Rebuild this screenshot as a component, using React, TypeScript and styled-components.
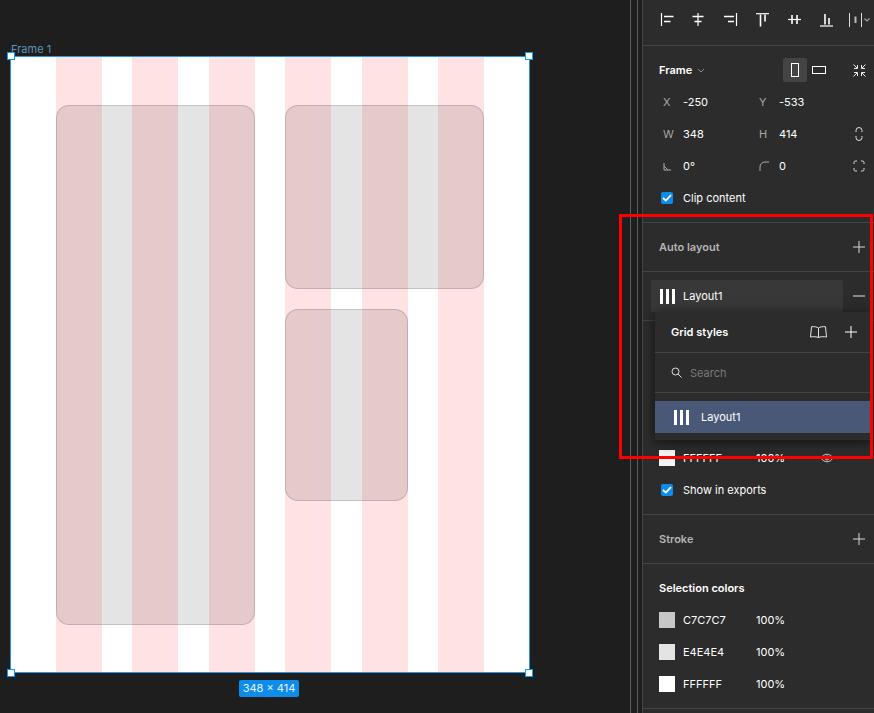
import * as React from 'react';
import styled, { createGlobalStyle } from 'styled-components';

const GlobalStyle = createGlobalStyle`
  html, body {
    margin: 0;
    padding: 0;
    background: #1e1e1e;
    overflow: hidden;
  }
  * { box-sizing: border-box; }
`;

const Screen = styled.div`
  width: 874px;
  height: 713px;
  display: flex;
  background: #1e1e1e;
  font-family: Inter, "Liberation Sans", sans-serif;
  font-size: 11px;
  color: #fff;
  position: relative;
  overflow: hidden;
`;

const Canvas = styled.div`
  width: 630px;
  flex-shrink: 0;
  padding: 56px 0 0 10px;
`;

const FrameBox = styled.div`
  position: relative;
  width: 520px;
  height: 617px;
  background: #fff;
  border: 1px solid #2a95e6;
`;

const FrameLabel = styled.span`
  position: absolute;
  left: 0;
  top: -14px;
  font-size: 11px;
  line-height: 13px;
  color: #5d93b8;
`;

const Handle = styled.span<{ $x: 'l' | 'r'; $y: 't' | 'b' }>`
  position: absolute;
  width: 8px;
  height: 8px;
  background: #fff;
  border: 1px solid #0d99ff;
  z-index: 3;
  ${(p) => (p.$x === 'l' ? 'left: -4px;' : 'right: -4px;')}
  ${(p) => (p.$y === 't' ? 'top: -5px;' : 'bottom: -5px;')}
`;

const SizeBadge = styled.span`
  position: absolute;
  left: 228px;
  top: 623px;
  height: 17px;
  width: 60px;
  background: #0d8ce9;
  border-radius: 2px;
  font-size: 11px;
  line-height: 17px;
  text-align: center;
  color: #e6f4ff;
`;

const GridColumns = styled.div`
  position: absolute;
  inset: 0 45px;
  display: grid;
  grid-template-columns: repeat(6, 46px);
  justify-content: space-between;
`;

const GridColumn = styled.div`
  background: #ffe2e3;
`;

const CardGrid = styled.div`
  position: absolute;
  left: 45px;
  top: 48px;
  display: grid;
  grid-template-columns: 199px 123px 46px;
  grid-template-rows: 183.5px 192px 103.5px;
  column-gap: 30px;
  row-gap: 20.5px;
  width: 428px;
`;

const Card = styled.div<{ $area: string }>`
  grid-area: ${(p) => p.$area};
  border: 1px solid rgba(0, 0, 0, 0.14);
  border-radius: 13px;
  background: rgba(0, 0, 0, 0.105);
`;

const Rails = styled.div`
  width: 12px;
  flex-shrink: 0;
  border-left: 1px solid #5e5e5e;
`;

const Rail = styled.div`
  width: 7px;
  height: 100%;
  border-right: 1px solid #5e5e5e;
`;

const Panel = styled.aside`
  width: 232px;
  flex-shrink: 0;
  background: #2c2c2c;
  border-left: 1px solid #444;
`;

const Section = styled.section<{ $h: number }>`
  height: ${(p) => p.$h}px;
  border-bottom: 1px solid #444;
`;

const AlignBar = styled(Section)`
  display: flex;
  align-items: center;
  gap: 18px;
  padding: 0 0 5px 17px;
  svg { flex-shrink: 0; }
`;

const LastAlign = styled.svg`
  margin-left: -3px;
`;

const FrameSection = styled(Section)`
  padding-top: 12px;
`;

const Row = styled.div`
  display: flex;
  align-items: center;
  height: 32px;
  padding-left: 16px;
  position: relative;
`;

const Title = styled.span<{ $muted?: boolean }>`
  font-weight: 600;
  font-size: 11px;
  color: ${(p) => (p.$muted ? '#b4b4b4' : '#fff')};
`;

const HeaderRow = styled.div`
  display: flex;
  align-items: center;
  justify-content: space-between;
  height: 48px;
  padding: 0 9px 0 16px;
`;

const ColorsHead = styled.div`
  height: 40px;
  padding: 17px 0 0 16px;
  line-height: 14px;
`;

const FrameHead = styled.div`
  display: flex;
  align-items: center;
  height: 24px;
  padding-left: 16px;
  margin-bottom: 4px;
`;

const Caret = styled.svg`
  margin-left: 5px;
`;

const OrientGroup = styled.div`
  display: flex;
  margin-left: 78px;
`;

const OrientButton = styled.div<{ $active?: boolean }>`
  width: 24px;
  height: 24px;
  display: flex;
  align-items: center;
  justify-content: center;
  border-radius: 2px;
  background: ${(p) => (p.$active ? '#444' : 'transparent')};
`;

const Expand = styled.svg`
  margin-left: 22px;
`;

const Field = styled.div`
  display: grid;
  grid-template-columns: 24px 72px 24px 72px 1fr;
  align-items: center;
  height: 32px;
  padding-left: 16px;
`;

const FieldLabel = styled.span`
  color: #a8a8a8;
  font-size: 11px;
  padding-left: 4px;
`;

const FieldValue = styled.span`
  color: #fff;
  font-size: 11px;
`;

const FieldIcon = styled.svg<{ $ml: number }>`
  margin-left: ${(p) => p.$ml}px;
`;

const Check = styled.span`
  width: 12px;
  height: 12px;
  border-radius: 2px;
  background: #0d8ce9;
  display: inline-flex;
  align-items: center;
  justify-content: center;
  margin: 0 10px 0 2px;
`;

const Swatch = styled.span<{ $c: string }>`
  width: 16px;
  height: 16px;
  background: ${(p) => p.$c};
  margin-right: 8px;
`;

const SwatchHex = styled.span`
  width: 73px;
`;

const Percent = styled.span`
  width: 64px;
`;

const FillSpacer = styled.div`
  height: 121px;
`;

const LayoutChip = styled.div`
  width: 192px;
  height: 32px;
  margin-left: 8px;
  padding-left: 9px;
  display: flex;
  align-items: center;
  gap: 8px;
  background: #383838;
  border-radius: 2px;
`;

const LayoutSection = styled(Section)`
  display: flex;
  align-items: center;
  padding-right: 9px;
  justify-content: space-between;
`;

const Popover = styled.div`
  position: absolute;
  left: 655px;
  top: 312px;
  width: 217px;
  height: 128px;
  background: #2c2c2c;
  box-shadow: 0 2px 12px rgba(0, 0, 0, 0.6);
  z-index: 4;
`;

const PopHead = styled.div`
  height: 41px;
  display: flex;
  align-items: center;
  padding: 0 15px 0 16px;
  border-bottom: 1px solid #444;
  justify-content: space-between;
`;

const PopIcons = styled.div`
  display: flex;
  align-items: center;
  gap: 18px;
`;

const PopSearch = styled.div`
  height: 40px;
  display: flex;
  align-items: center;
  gap: 8px;
  padding-left: 16px;
  color: #7a7a7a;
  border-bottom: 1px solid #444;
`;

const PopItem = styled.div`
  height: 32px;
  margin-top: 8px;
  background: #4a5878;
  display: flex;
  align-items: center;
  gap: 12px;
  padding-left: 19px;
`;

const RedBox = styled.div`
  position: absolute;
  left: 619px;
  top: 214px;
  width: 254px;
  height: 245px;
  border: 3px solid #ff0000;
  z-index: 5;
  pointer-events: none;
`;

const Plus = () => (
  <svg width="12" height="12" viewBox="0 0 12 12" fill="none" stroke="#d8d8d8">
    <path d="M6 0v12M0 6h12" />
  </svg>
);

const Bars = () => (
  <svg width="15" height="15" viewBox="0 0 15 15" fill="#fff">
    <rect x="0" width="3" height="15" />
    <rect x="6" width="3" height="15" />
    <rect x="12" width="3" height="15" />
  </svg>
);

const Tick = () => (
  <svg width="10" height="8" viewBox="0 0 10 8" fill="none" stroke="#fff" strokeWidth="1.8">
    <path d="M1 4l2.8 2.6L9 1.2" />
  </svg>
);

// thin line is the edge the bars align to, thick strokes are the bars
const alignIcons = [
  { line: 'M1.5 0v13', bars: 'M4 3.500h9.500M4 8.500h6.500' },
  { line: 'M6 0v13', bars: 'M0.500 3.500h11M2.500 8.500h7' },
  { line: 'M12.500 0v13', bars: 'M0 3.500h10M4 8.500h6' },
  { line: 'M0 0.700h13', bars: 'M4.500 1.500v12M9 1.500v7' },
  { line: 'M0 6.500h13', bars: 'M4 2v9M9 2v9' },
  { line: 'M0 13h13', bars: 'M5 1v10.500M9 5v6.500' },
];

const App: React.FC = () => {
  return (
    <>
      <GlobalStyle />
      <Screen>
        <Canvas>
          <FrameBox>
            <FrameLabel>Frame 1</FrameLabel>
            <GridColumns>
              {[0, 1, 2, 3, 4, 5].map((i) => (
                <GridColumn key={i} />
              ))}
            </GridColumns>
            <CardGrid>
              <Card $area="1 / 1 / 4 / 2" />
              <Card $area="1 / 2 / 2 / 4" />
              <Card $area="2 / 2 / 3 / 3" />
            </CardGrid>
            <Handle $x="l" $y="t" />
            <Handle $x="r" $y="t" />
            <Handle $x="l" $y="b" />
            <Handle $x="r" $y="b" />
            <SizeBadge>348 × 414</SizeBadge>
          </FrameBox>
        </Canvas>
        <Rails>
          <Rail />
        </Rails>
        <Panel>
          <AlignBar $h={46}>
            {alignIcons.map((icon) => (
              <svg key={icon.line} width="14" height="14" viewBox="0 0 14 14" fill="none" stroke="#fff">
                <path d={icon.line} strokeWidth="1.2" />
                <path d={icon.bars} strokeWidth="1.6" />
              </svg>
            ))}
            <LastAlign width="22" height="14" viewBox="0 0 22 14" fill="none" stroke="#ddd">
              <path d="M0.500 0v14M12.500 0v14" />
              <path d="M6.500 3.500v6.500" strokeWidth="2" stroke="#bbb" />
              <path d="M15.500 5.500l2.500 2.500 2.500-2.500" stroke="#a0a0a0" strokeWidth="1.2" />
            </LastAlign>
          </AlignBar>
          <FrameSection $h={177}>
            <FrameHead>
              <Title>Frame</Title>
              <Caret width="8" height="5" viewBox="0 0 8 5" fill="none" stroke="#888">
                <path d="M1 1l3 3 3-3" />
              </Caret>
              <OrientGroup>
                <OrientButton $active>
                  <svg width="8" height="14" viewBox="0 0 8 14" fill="none" stroke="#fff">
                    <rect x="0.5" y="0.5" width="7" height="13" />
                  </svg>
                </OrientButton>
                <OrientButton>
                  <svg width="14" height="8" viewBox="0 0 14 8" fill="none" stroke="#fff">
                    <rect x="0.5" y="0.5" width="13" height="7" />
                  </svg>
                </OrientButton>
              </OrientGroup>
              <Expand width="13" height="13" viewBox="0 0 13 13" fill="none" stroke="#eee">
                <path d="M.5.5L4 4M4.500 1v3.500H1M12.500.5L9 4M8.500 1v3.500H12M.5 12.500L4 9M4.500 12V8.500H1M12.500 12.500L9 9M8.500 12V8.500H12" />
              </Expand>
            </FrameHead>
            <Field>
              <FieldLabel>X</FieldLabel>
              <FieldValue>-250</FieldValue>
              <FieldLabel>Y</FieldLabel>
              <FieldValue>-533</FieldValue>
            </Field>
            <Field>
              <FieldLabel>W</FieldLabel>
              <FieldValue>348</FieldValue>
              <FieldLabel>H</FieldLabel>
              <FieldValue>414</FieldValue>
              <FieldIcon $ml={4} width="8" height="14" viewBox="0 0 8 14" fill="none" stroke="#ddd">
                <path d="M1 5V3.500a3 3 0 0 1 6 0V5M1 9v1.500a3 3 0 0 0 6 0V9" />
              </FieldIcon>
            </Field>
            <Field>
              <FieldIcon $ml={4} width="9" height="9" viewBox="0 0 9 9" fill="none" stroke="#aaa">
                <path d="M1 1v7h7M1 4l4 4" />
              </FieldIcon>
              <FieldValue>0°</FieldValue>
              <FieldIcon $ml={4} width="10" height="10" viewBox="0 0 10 10" fill="none" stroke="#aaa">
                <path d="M1 10V6a5 5 0 0 1 5-5h4" />
              </FieldIcon>
              <FieldValue>0</FieldValue>
              <FieldIcon $ml={2} width="12" height="12" viewBox="0 0 12 12" fill="none" stroke="#ddd">
                <path d="M1 4V2.500a1.500 1.500 0 0 1 1.500-1.500H4M8 1h1.500A1.500 1.500 0 0 1 11 2.500V4M11 8v1.500A1.500 1.500 0 0 1 9.500 11H8M4 11H2.500A1.500 1.500 0 0 1 1 9.500V8" />
              </FieldIcon>
            </Field>
            <Row>
              <Check>
                <Tick />
              </Check>
              <span>Clip content</span>
            </Row>
          </FrameSection>
          <Section $h={49}>
            <HeaderRow>
              <Title $muted>Auto layout</Title>
              <Plus />
            </HeaderRow>
          </Section>
          <LayoutSection $h={49}>
            <LayoutChip>
              <Bars />
              <span>Layout1</span>
            </LayoutChip>
            <svg width="12" height="2" viewBox="0 0 12 2" stroke="#e5e5e5">
              <path d="M0 1h12" />
            </svg>
          </LayoutSection>
          <Section $h={194}>
            <FillSpacer />
            <Row>
              <Swatch $c="#f4f4f4" />
              <SwatchHex>FFFFFF</SwatchHex>
              <Percent>100%</Percent>
              <svg width="14" height="10" viewBox="0 0 14 10" fill="none" stroke="#ccc">
                <path d="M1 5c3-5 9-5 12 0-3 5-9 5-12 0z" />
                <circle cx="7" cy="5" r="2" />
              </svg>
            </Row>
            <Row>
              <Check>
                <Tick />
              </Check>
              <span>Show in exports</span>
            </Row>
          </Section>
          <Section $h={49}>
            <HeaderRow>
              <Title $muted>Stroke</Title>
              <Plus />
            </HeaderRow>
          </Section>
          <Section $h={145}>
            <ColorsHead>
              <Title>Selection colors</Title>
            </ColorsHead>
            {[
              ['C7C7C7', '#c7c7c7'],
              ['E4E4E4', '#e4e4e4'],
              ['FFFFFF', '#ffffff'],
            ].map(([hex, c]) => (
              <Row key={hex}>
                <Swatch $c={c} />
                <SwatchHex>{hex}</SwatchHex>
                <span>100%</span>
              </Row>
            ))}
          </Section>
        </Panel>
        <Popover>
          <PopHead>
            <Title>Grid styles</Title>
            <PopIcons>
              <svg width="17" height="12" viewBox="0 0 17 12" fill="none" stroke="#e5e5e5">
                <path d="M8.500 2C7 .8 4 .5 1.500.7L.5 11c3-.5 6-.4 8 .5 2-.9 5-1 8-.5l-1-10.300C13 .5 10 .8 8.500 2zM8.500 2v9.500" />
              </svg>
              <svg width="12" height="12" viewBox="0 0 12 12" fill="none" stroke="#fff">
                <path d="M6 0v12M0 6h12" />
              </svg>
            </PopIcons>
          </PopHead>
          <PopSearch>
            <svg width="11" height="11" viewBox="0 0 11 11" fill="none" stroke="#ddd">
              <circle cx="4.500" cy="4.500" r="3.500" />
              <path d="M7 7l3.500 3.500" />
            </svg>
            <span>Search</span>
          </PopSearch>
          <PopItem>
            <Bars />
            <span>Layout1</span>
          </PopItem>
        </Popover>
        <RedBox />
      </Screen>
    </>
  );
};

export default App;
